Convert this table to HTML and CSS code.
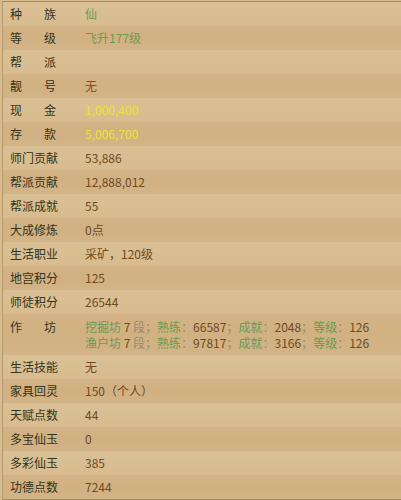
FILE: index.html
```html
<!DOCTYPE html>
<html lang="zh">
<head>
<meta charset="utf-8">
<link rel="stylesheet" href="styles.css">
</head>
<body>
<div class="panel">
  <div class="row"><div class="label">种族</div><div class="value green">仙</div></div>
  <div class="row"><div class="label">等级</div><div class="value green">飞升177级</div></div>
  <div class="row"><div class="label">帮派</div><div class="value"></div></div>
  <div class="row"><div class="label">靓号</div><div class="value red">无</div></div>
  <div class="row"><div class="label">现金</div><div class="value yellow">1,000,400</div></div>
  <div class="row"><div class="label">存款</div><div class="value yellow">5,006,700</div></div>
  <div class="row"><div class="label">师门贡献</div><div class="value">53,886</div></div>
  <div class="row"><div class="label">帮派贡献</div><div class="value">12,888,012</div></div>
  <div class="row"><div class="label">帮派成就</div><div class="value">55</div></div>
  <div class="row"><div class="label">大成修炼</div><div class="value">0点</div></div>
  <div class="row"><div class="label">生活职业</div><div class="value">采矿，120级</div></div>
  <div class="row"><div class="label">地宫积分</div><div class="value">125</div></div>
  <div class="row"><div class="label">师徒积分</div><div class="value">26544</div></div>
  <div class="row tall">
    <div class="label">作坊</div>
    <div class="value multi">
      <div class="line"><span class="green">挖掘坊</span> 7 <span class="gray">段；</span><span class="green">熟练</span><span class="gray">：</span>66587<span class="gray">；</span><span class="green">成就</span><span class="gray">：</span>2048<span class="gray">；</span><span class="green">等级</span><span class="gray">：</span>126</div>
      <div class="line"><span class="green">渔户坊</span> 7 <span class="gray">段；</span><span class="green">熟练</span><span class="gray">：</span>97817<span class="gray">；</span><span class="green">成就</span><span class="gray">：</span>3166<span class="gray">；</span><span class="green">等级</span><span class="gray">：</span>126</div>
    </div>
  </div>
  <div class="row"><div class="label">生活技能</div><div class="value">无</div></div>
  <div class="row"><div class="label">家具回灵</div><div class="value">150（个人）</div></div>
  <div class="row"><div class="label">天赋点数</div><div class="value">44</div></div>
  <div class="row"><div class="label">多宝仙玉</div><div class="value">0</div></div>
  <div class="row"><div class="label">多彩仙玉</div><div class="value">385</div></div>
  <div class="row"><div class="label">功德点数</div><div class="value">7244</div></div>
</div>
</body>
</html>
```
FILE: styles.css
```css
html, body {
  margin: 0;
  padding: 0;
  background: #d8bc8f;
}
body {
  width: 401px;
  height: 500px;
  overflow: hidden;
  font-family: "Noto Sans CJK SC", "Noto Sans", sans-serif;
  font-size: 12px;
}
.panel {
  margin: 1px 0 0 2px;
  border-top: 1px solid #a88b5c;
  border-left: 1px solid #b59a6c;
  border-bottom: 1px solid #a88b5c;
  display: flex;
  flex-direction: column;
}
.row {
  display: flex;
  height: 24px;
  line-height: 24px;
  background: linear-gradient(180deg, #dac095 0%, #d9be92 50%, #d8bc8f 100%);
}
.row:nth-child(even) {
  background: linear-gradient(180deg, #d3b385 0%, #d1b182 50%, #d3b487 100%);
}
.label {
  width: 46px;
  margin-left: 7px;
  margin-right: 29px;
  color: #33341a;
  text-align: justify;
  text-align-last: justify;
  white-space: nowrap;
}
.value {
  color: #6e4b1e;
  white-space: nowrap;
}
.green { color: #6c9a52; }
.red { color: #9a4620; }
.yellow { color: #efe03c; }
.gray { color: #9a8a6a; }
.row.tall {
  height: 41px;
  line-height: 16px;
  padding-top: 5px;
  box-sizing: border-box;
}
.multi .line {
  height: 16px;
}
```
